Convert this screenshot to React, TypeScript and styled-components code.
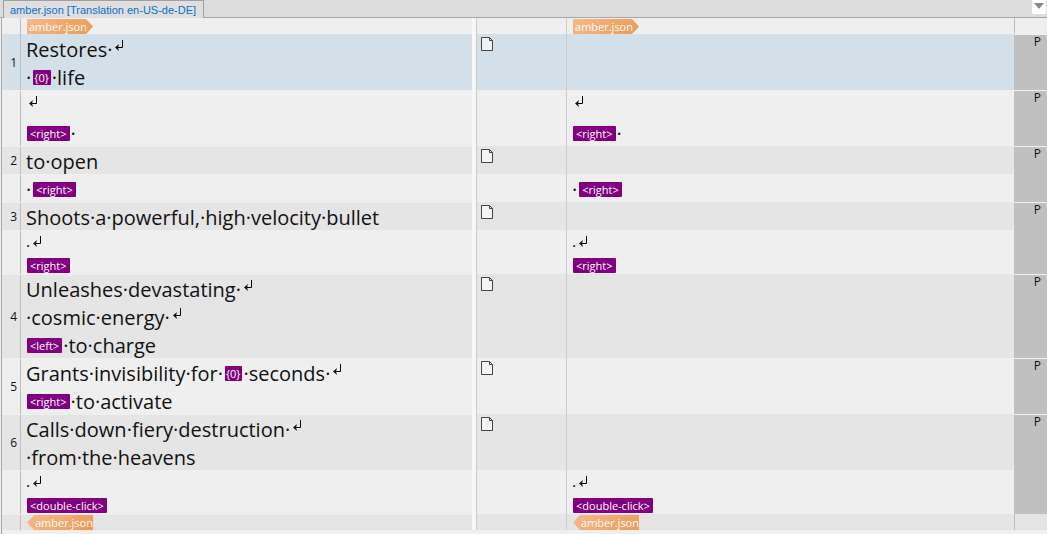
import React from "react";
import styled, { createGlobalStyle } from "styled-components";

const Global = createGlobalStyle`
  * { box-sizing: border-box; }
  body { margin: 0; background: #efefef; font-family: "Open Sans", "Noto Sans", sans-serif; color: #111; }
`;

const Editor = styled.main`
  min-height: 100vh;
  display: flex;
  flex-direction: column;
  background: #efefef;
`;

const TabBar = styled.nav`
  display: flex;
  align-items: flex-start;
  justify-content: space-between;
  height: 18px;
  padding-left: 3px;
  background: #dcdcdc;
  border-bottom: 1px solid #a8a8a8;
`;

const Tab = styled.button`
  height: 18px;
  padding: 1px 7px 0 6px;
  border: 1px solid #a0a0a0;
  border-bottom: 0;
  background: #dfdfdf;
  color: #0b6fc4;
  font: 11px/16px "Liberation Sans", Arial, sans-serif;
  white-space: nowrap;
`;

const MenuButton = styled.button`
  display: flex;
  justify-content: center;
  width: 14px;
  height: 14px;
  margin-right: 1px;
  padding: 3px 0 0;
  border: 0;
  background: #fff;
`;

const Panel = styled.section`
  flex: 1;
  margin-left: 1px;
  border-left: 1px solid #a8a8a8;
`;

const Grid = styled.table`
  width: 100%;
  table-layout: fixed;
  border-collapse: separate;
  border-spacing: 0;
`;

const Col = styled.col<{ $w?: string }>`
  width: ${(p) => p.$w ?? "auto"};
`;

type Tone = "light" | "dark" | "active";
const tones: Record<Tone, string> = { light: "#efefef", dark: "#e5e5e5", active: "#d3e0ea" };

const Row = styled.tr<{ $tone: Tone }>`
  background: ${(p) => tones[p.$tone]};
`;

const Cell = styled.td`
  padding: 0;
  vertical-align: top;
`;

/* The row seam is a light hairline that also interrupts the number rule. */
const NumberCell = styled.th<{ $seam: boolean }>`
  padding: 0 4px 0 0;
  background-image: linear-gradient(${(p) => (p.$seam ? "#efefef, #efefef" : "transparent, transparent")}),
    linear-gradient(#bdbdbd, #bdbdbd);
  background-position: left top, right top;
  background-size: 100% 1px, 1px 100%;
  background-repeat: no-repeat;
  font-size: 12px;
  font-weight: 400;
  line-height: 16px;
  text-align: right;
  vertical-align: middle;
`;

const SegmentNumber = styled.span`
  display: block;
  padding-top: 2px;
`;

const TextCell = styled(Cell)<{ $seam?: boolean }>`
  padding-left: 5px;
  box-shadow: ${(p) => (p.$seam ? "inset 0 1px #efefef" : "none")};
`;

const Splitter = styled(Cell)`
  background: #f8f8f8;
  border-right: 1px solid #cccccc;
`;

const InfoCell = styled(Cell)`
  padding: 3px 0 0 4px;
  border-right: 1px solid #cccccc;
`;

const StatusCell = styled(Cell)`
  padding: 0 6px 0 0;
  background: #c0c0c0;
  border-top: 1px solid #efefef;
  font-size: 12px;
  line-height: 14px;
  text-align: right;
`;

const EdgeCell = styled(Cell)`
  border-left: 1px solid #bdbdbd;
`;

const Line = styled.div<{ $compact: boolean }>`
  display: flex;
  align-items: flex-start;
  height: ${(p) => (p.$compact ? 16 : 28)}px;
  padding-top: ${(p) => (p.$compact ? 0 : 8)}px;
  font-size: 20px;
  line-height: 16px;
  white-space: pre;
`;

const Tag = styled.span<{ $tight: boolean }>`
  height: 15px;
  margin: 0 1px;
  padding: ${(p) => (p.$tight ? "0 2px 0 1px" : "0 3px")};
  border-radius: 1px;
  background: #800080;
  color: #fff;
  font-size: 11px;
  line-height: 15px;

  span + & {
    margin-left: 2px;
  }
`;

const Stop = styled.span`
  font-size: 16px;
  line-height: 6px;
`;

const FileMark = styled.span<{ $end: boolean }>`
  display: block;
  width: 66px;
  height: 15px;
  margin: 1px 0 0 1px;
  padding-left: ${(p) => (p.$end ? 8 : 2)}px;
  background: linear-gradient(135deg, #f5b98a, #ed9a55);
  clip-path: ${(p) =>
    p.$end
      ? "polygon(0 50%, 7px 0, 100% 0, 100% 100%, 7px 100%)"
      : "polygon(0 0, 59px 0, 100% 50%, 59px 100%, 0 100%)"};
  color: #fff;
  font-size: 11px;
  line-height: 15px;
`;

const ReturnIcon = styled.svg`
  display: block;
  flex: none;
  margin: -2px 0 0 3px;
`;

const PageIcon = styled.svg`
  display: block;
`;

const Return = () => (
  <ReturnIcon width="9" height="11" viewBox="0 0 9 11" aria-hidden="true">
    <path d="M7.500 0v7.500H1" fill="none" stroke="#000" />
    <path d="M0 7.500 4 4 3 7.500 4 11z" fill="#111" />
  </ReturnIcon>
);

const Page = () => (
  <PageIcon width="12" height="14" viewBox="0 0 12 14" aria-hidden="true">
    <path d="M.5.5h8l3 3v10H.5z" fill="#f8f8f8" fillOpacity=".8" stroke="#444" />
    <path d="M8.500.5v3h3" fill="none" stroke="#444" />
  </PageIcon>
);

/* Text runs, "<name>" or "{0}" placeholders, and "↵" line-end marks. */
const renderLine = (line: string) =>
  line
    .split(/(<[^>]+>|\{\d\}|↵)/)
    .filter(Boolean)
    .map((part, i) => {
      if (part === "↵") return <Return key={i} />;
      if (part === ".") return <Stop key={i}>.</Stop>;
      if (/^[<{]/.test(part)) return <Tag key={i} $tight={part[0] === "{"}>{part}</Tag>;
      return <span key={i}>{part}</span>;
    });

const Lines = ({ lines, compactEnd }: { lines?: string[]; compactEnd?: boolean }) => (
  <>
    {lines?.map((line, i) => (
      <Line key={i} $compact={!!compactEnd && i === lines.length - 1}>
        {renderLine(line)}
      </Line>
    ))}
  </>
);

interface Segment {
  id?: number;
  tone: Tone;
  source: string[];
  target?: string[];
  compactEnd?: boolean;
  statusSpan?: number;
}

const segments: Segment[] = [
  { id: 1, tone: "active", source: ["Restores·↵", "·{0}·life"], statusSpan: 1 },
  { tone: "light", source: ["↵", "<right>·"], target: ["↵", "<right>·"], statusSpan: 1 },
  { id: 2, tone: "dark", source: ["to·open"], statusSpan: 2 },
  { tone: "light", source: ["·<right>"], target: ["·<right>"] },
  { id: 3, tone: "dark", source: ["Shoots·a·powerful,·high·velocity·bullet"], statusSpan: 2 },
  { tone: "light", source: [".↵", "<right>"], target: [".↵", "<right>"], compactEnd: true },
  { id: 4, tone: "dark", source: ["Unleashes·devastating·↵", "·cosmic·energy·↵", "<left>·to·charge"], statusSpan: 1 },
  { id: 5, tone: "light", source: ["Grants·invisibility·for·{0}·seconds·↵", "<right>·to·activate"], statusSpan: 1 },
  { id: 6, tone: "dark", source: ["Calls·down·fiery·destruction·↵", "·from·the·heavens"], statusSpan: 2 },
  { tone: "light", source: [".↵", "<double-click>"], target: [".↵", "<double-click>"], compactEnd: true },
];

const FileRow = ({ end = false }: { end?: boolean }) => (
  <Row $tone={end ? "dark" : "light"}>
    <NumberCell $seam={end} />
    <TextCell $seam={end}>
      <FileMark $end={end}>amber.json</FileMark>
    </TextCell>
    <Splitter />
    <InfoCell />
    <TextCell>
      <FileMark $end={end}>amber.json</FileMark>
    </TextCell>
    <EdgeCell />
  </Row>
);

export default function App() {
  return (
    <Editor>
      <Global />
      <TabBar>
        <Tab>amber.json [Translation en-US-de-DE]</Tab>
        <MenuButton aria-label="Open documents">
          <svg width="10" height="6" aria-hidden="true">
            <path d="M0 0h10L5 6z" fill="#888" />
          </svg>
        </MenuButton>
      </TabBar>
      <Panel>
        <Grid>
          <colgroup>
            <Col $w="19px" />
            <Col $w="43.16%" />
            <Col $w="5px" />
            <Col $w="90px" />
            <Col />
            <Col $w="33px" />
          </colgroup>
          <tbody>
            <FileRow />
            {segments.map((s, i) => {
              const seam = s.tone !== "active";
              return (
                <Row key={i} $tone={s.tone}>
                  <NumberCell $seam={seam} scope="row">
                    {s.id && <SegmentNumber>{s.id}</SegmentNumber>}
                  </NumberCell>
                  <TextCell $seam={seam}>
                    <Lines lines={s.source} compactEnd={s.compactEnd} />
                  </TextCell>
                  <Splitter />
                  <InfoCell>{s.id && <Page />}</InfoCell>
                  <TextCell>
                    <Lines lines={s.target} compactEnd={s.compactEnd} />
                  </TextCell>
                  {s.statusSpan && <StatusCell rowSpan={s.statusSpan}>P</StatusCell>}
                </Row>
              );
            })}
            <FileRow end />
          </tbody>
        </Grid>
      </Panel>
    </Editor>
  );
}
